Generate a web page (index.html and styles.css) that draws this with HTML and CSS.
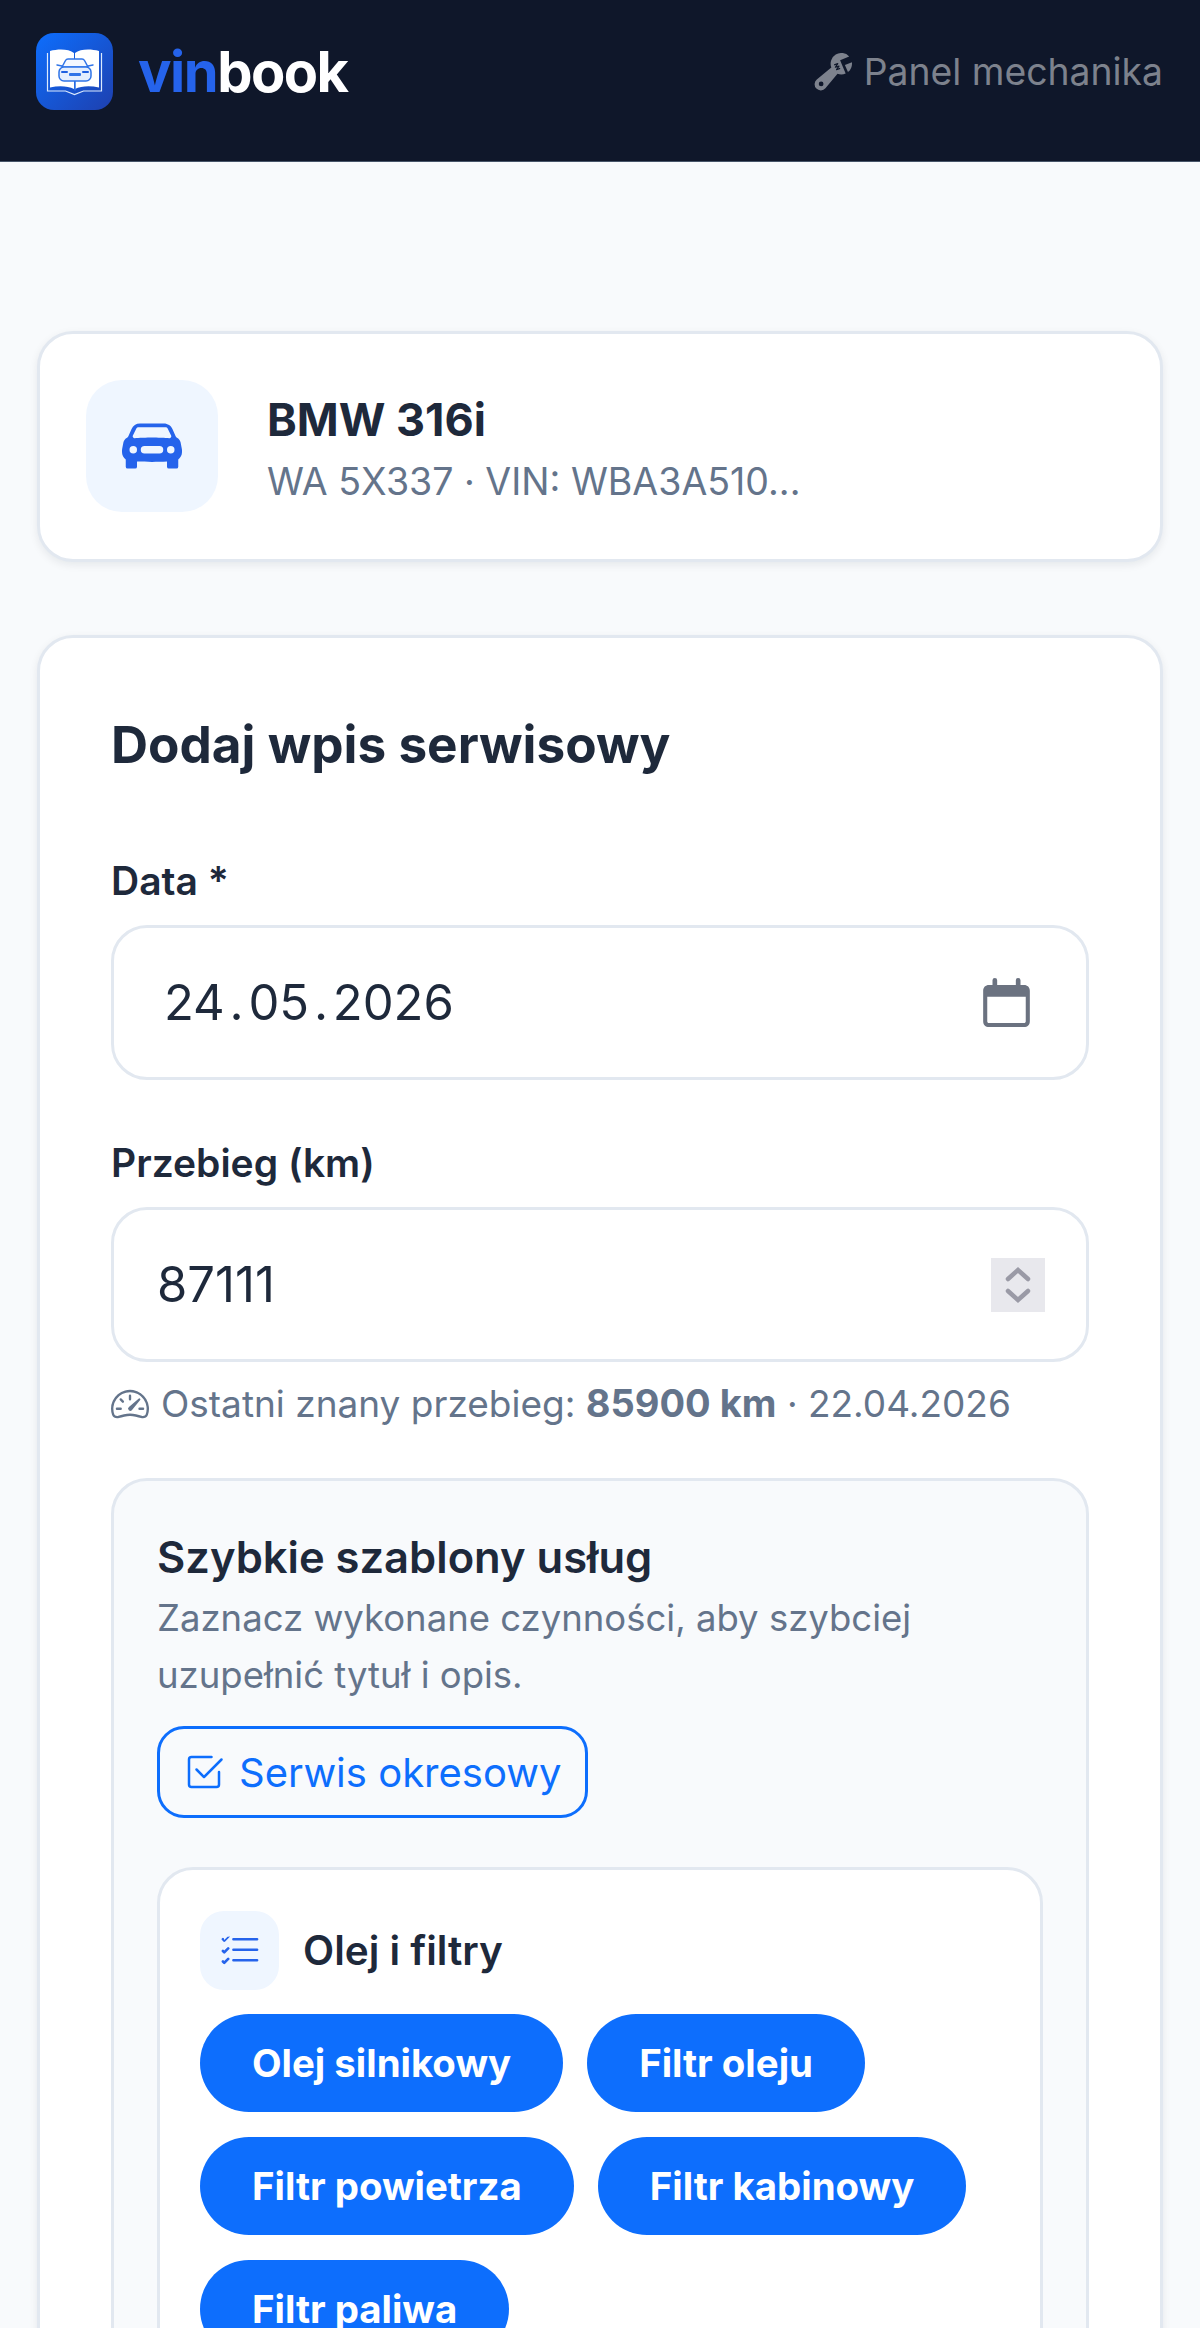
FILE: index.html
```html
<!DOCTYPE html>
<html lang="pl">
<head>
  <meta charset="UTF-8" />
  <title>vinbook - Dodaj wpis serwisowy</title>
  <link rel="stylesheet" href="styles.css">
</head>
<body>

<header class="topbar">
  <a class="brand" href="#">
    <svg class="brand-logo" viewBox="0 0 77 77">
      <defs>
        <linearGradient id="logo-bg" x1="0" y1="0" x2="1" y2="1">
          <stop offset="0" stop-color="#0d6efd" />
          <stop offset="1" stop-color="#1e40af" />
        </linearGradient>
      </defs>
      <rect width="77" height="77" rx="18" fill="url(#logo-bg)" />
      <path d="M11.500 20v38h18l9 3.500 9-3.500h18V20" fill="none" stroke="#dbeafe" stroke-width="1.200" />
      <path d="M14 18c9-2.500 19-2 24 2v36c-6-3-15-3.500-24-1.500z" fill="#fff" />
      <path d="M63 18c-9-2.500-19-2-24 2v36c6-3 15-3.500 24-1.500z" fill="#fff" />
      <path d="M26 33l-5-1M52 33l5-1M39 48v9" fill="none" stroke="#2f74e8" stroke-width="1.500" stroke-linecap="round" />
      <path d="M26 34l3.500-6.500c.6-1.100 1.500-1.500 2.500-1.500h14c1 0 1.900.4 2.500 1.500L52 34z" fill="#f4f8ff" stroke="#2f74e8" stroke-width="1.500" />
      <rect x="23" y="34" width="32" height="14" rx="5" fill="#e3eefe" stroke="#2f74e8" stroke-width="1.500" />
      <path d="M26 39h5M47 39h5" stroke="#1d5fe0" stroke-width="2" stroke-linecap="round" />
      <rect x="33" y="40" width="12" height="3" rx="1" fill="#2f74e8" />
    </svg>
    <span class="brand-name"><span class="brand-vin">vin</span>book</span>
  </a>
  <a class="panel-link" href="#">
    <svg class="icon" viewBox="0 0 16 16" fill="currentColor">
      <path d="M16 4.500a4.500 4.500 0 0 1-1.703 3.526L13 5l2.959-1.110q.04.3.041.61"/>
      <path d="M11.500 9c.653 0 1.273-.139 1.833-.39L12 5.500 11 3l3.826-1.530A4.500 4.500 0 0 0 7.290 6.092l-6.116 5.096a2.583 2.583 0 1 0 3.638 3.638L9.908 8.710A4.500 4.500 0 0 0 11.500 9m-1.292-4.361-.596.893.809-.27a.25.25 0 0 1 .287.377l-.596.893.809-.27.158.475-1.500.5a.25.25 0 0 1-.287-.376l.596-.893-.809.27a.25.25 0 0 1-.287-.377l.596-.893-.809.27-.158-.475 1.500-.5a.25.25 0 0 1 .287.376M3 14a1 1 0 1 1 0-2 1 1 0 0 1 0 2"/>
    </svg>
    Panel mechanika
  </a>
</header>

<main class="page">

  <section class="card vehicle">
    <div class="vehicle-icon">
      <svg viewBox="0 0 16 16" fill="currentColor">
        <path d="M2.520 3.515A2.500 2.500 0 0 1 4.820 2h6.362c1 0 1.904.596 2.298 1.515l.792 1.848c.075.175.21.319.38.404.5.25.855.715.965 1.262l.335 1.679q.05.242.049.49v.413c0 .814-.39 1.543-1 1.997V13.500a.5.5 0 0 1-.5.5h-2a.5.5 0 0 1-.5-.5v-1.338c-1.292.048-2.745.088-4 .088s-2.708-.04-4-.088V13.500a.5.5 0 0 1-.5.5h-2a.5.5 0 0 1-.5-.5v-1.892c-.61-.454-1-1.183-1-1.997v-.413a2.500 2.500 0 0 1 .049-.49l.335-1.680c.11-.546.465-1.012.964-1.261a.8.8 0 0 0 .381-.404l.792-1.848ZM3 10a1 1 0 1 0 0-2 1 1 0 0 0 0 2m10 0a1 1 0 1 0 0-2 1 1 0 0 0 0 2M6 8a1 1 0 0 0 0 2h4a1 1 0 1 0 0-2zM2.906 5.189a.51.51 0 0 0 .497.731c.91-.073 3.350-.17 4.597-.17s3.688.097 4.597.17a.51.51 0 0 0 .497-.731l-.956-1.913A.5.5 0 0 0 11.691 3H4.309a.5.5 0 0 0-.447.276L2.906 5.190Z"/>
      </svg>
    </div>
    <div class="vehicle-info">
      <div class="vehicle-name">BMW 316i</div>
      <div class="vehicle-meta">WA 5X337 · VIN: WBA3A510...</div>
    </div>
  </section>

  <section class="card form-card">
    <h1>Dodaj wpis serwisowy</h1>

    <div class="field">
      <div class="field-label">Data *</div>
      <div class="input input-date">
        <span>24 . 05 . 2026</span>
        <svg class="calendar" viewBox="4 3 40 42">
          <path d="M12 5a2 2 0 0 1 4 0v4h16V5a2 2 0 0 1 4 0v4h3c3 0 5 2 5 5v26c0 3-2 5-5 5H9c-3 0-5-2-5-5V14c0-3 2-5 5-5h3zM7.500 19v21c0 1 .5 1.500 1.500 1.500h30c1 0 1.500-.5 1.500-1.500V19z" fill="#6b7280" />
        </svg>
      </div>
    </div>

    <div class="field">
      <div class="field-label">Przebieg (km)</div>
      <div class="input input-number">
        <span>87111</span>
        <div class="spinner">
          <svg viewBox="0 0 54 54" fill="none" stroke="#9a9aa6" stroke-width="4.500" stroke-linecap="round">
            <path d="M17 21l10-9 10 9M17 33l10 9 10-9" />
          </svg>
        </div>
      </div>
      <p class="hint">
        <svg class="icon-hint" viewBox="0 0 16 16" fill="currentColor">
          <path d="M8 4a.5.5 0 0 1 .5.5V6a.5.5 0 0 1-1 0V4.500A.5.5 0 0 1 8 4M3.732 5.732a.5.5 0 0 1 .707 0l.915.914a.5.5 0 1 1-.708.708l-.914-.915a.5.5 0 0 1 0-.707M2 10a.5.5 0 0 1 .5-.5h1.586a.5.5 0 0 1 0 1H2.500A.5.5 0 0 1 2 10m9.500 0a.5.5 0 0 1 .5-.5h1.500a.5.5 0 0 1 0 1H12a.5.5 0 0 1-.5-.5m.754-4.246a.39.39 0 0 0-.527-.02L7.547 9.310a.91.91 0 1 0 1.302 1.258l3.434-4.297a.39.39 0 0 0-.029-.518z"/>
          <path fill-rule="evenodd" d="M0 10a8 8 0 1 1 15.547 2.661c-.442 1.253-1.845 1.602-2.932 1.250C11.309 13.488 9.475 13 8 13c-1.474 0-3.310.488-4.615.911-1.087.352-2.490.003-2.932-1.250A8 8 0 0 1 0 10m8-7a7 7 0 0 0-6.603 9.329c.203.575.923.876 1.680.63C4.397 12.533 6.358 12 8 12s3.604.532 4.923.96c.757.245 1.477-.056 1.680-.631A7 7 0 0 0 8 3"/>
        </svg>
        <span>Ostatni znany przebieg: <strong>85900 km</strong> · 22.04.2026</span>
      </p>
    </div>

    <div class="templates">
      <h2>Szybkie szablony usług</h2>
      <p class="templates-desc">Zaznacz wykonane czynności, aby szybciej uzupełnić tytuł i opis.</p>
      <button class="template-btn">
        <svg class="icon-btn" viewBox="0 0 16 16" fill="currentColor">
          <path d="M3 14.500A1.500 1.500 0 0 1 1.500 13V3A1.500 1.500 0 0 1 3 1.500h8a.5.5 0 0 1 0 1H3a.5.5 0 0 0-.5.5v10a.5.5 0 0 0 .5.5h10a.5.5 0 0 0 .5-.5V8a.5.5 0 0 1 1 0v5a1.500 1.500 0 0 1-1.500 1.500z"/>
          <path d="m8.354 10.354 7-7a.5.5 0 0 0-.708-.708L8 9.293 5.354 6.646a.5.5 0 1 0-.708.708l3 3a.5.5 0 0 0 .708 0"/>
        </svg>
        Serwis okresowy
      </button>

      <div class="group">
        <div class="group-head">
          <div class="group-icon">
            <svg viewBox="0 0 16 16" fill="currentColor">
              <path fill-rule="evenodd" d="M5 11.500a.5.5 0 0 1 .5-.5h9a.5.5 0 0 1 0 1h-9a.5.5 0 0 1-.5-.5m0-4a.5.5 0 0 1 .5-.5h9a.5.5 0 0 1 0 1h-9a.5.5 0 0 1-.5-.5m0-4a.5.5 0 0 1 .5-.5h9a.5.5 0 0 1 0 1h-9a.5.5 0 0 1-.5-.5M3.854 2.146a.5.5 0 0 1 0 .708l-1.500 1.500a.5.5 0 0 1-.708 0l-.5-.5a.5.5 0 1 1 .708-.708L2 3.793l1.146-1.147a.5.5 0 0 1 .708 0m0 4a.5.5 0 0 1 0 .708l-1.500 1.500a.5.5 0 0 1-.708 0l-.5-.5a.5.5 0 1 1 .708-.708L2 7.793l1.146-1.147a.5.5 0 0 1 .708 0m0 4a.5.5 0 0 1 0 .708l-1.500 1.500a.5.5 0 0 1-.708 0l-.5-.5a.5.5 0 0 1 .708-.708l.146.147 1.146-1.147a.5.5 0 0 1 .708 0"/>
            </svg>
          </div>
          <span class="group-title">Olej i filtry</span>
        </div>
        <div class="pills">
          <span class="pill">Olej silnikowy</span>
          <span class="pill">Filtr oleju</span>
          <span class="pill">Filtr powietrza</span>
          <span class="pill">Filtr kabinowy</span>
          <span class="pill">Filtr paliwa</span>
        </div>
      </div>
    </div>
  </section>

</main>

</body>
</html>
```

FILE: styles.css
```css
* {
  box-sizing: border-box;
}
html, body {
  height: 100%;
}
body {
  margin: 0;
  overflow: hidden;
  background: #f8fafc;
  color: #1e293b;
  font-family: Inter, "Noto Sans", sans-serif;
  font-size: 36px;
}
a {
  text-decoration: none;
}

.topbar {
  display: flex;
  justify-content: space-between;
  align-items: center;
  height: 162px;
  padding: 0 37px 18px 36px;
  background: #0f172a;
  border-bottom: 1px solid #475569;
}
.brand {
  display: flex;
  align-items: center;
  gap: 25px;
}
.brand-logo {
  display: block;
  width: 77px;
  height: 77px;
}
.brand-name {
  color: #fff;
  font-size: 56px;
  font-weight: 700;
  letter-spacing: -1.5px;
  line-height: 1;
}
.brand-vin {
  color: #2563eb;
}
.panel-link {
  display: flex;
  align-items: center;
  gap: 12px;
  color: #7d828d;
  font-size: 37.300px;
}
.icon {
  width: 38px;
  height: 38px;
  flex: none;
}

.page {
  padding: 169px 37px 0;
}
.card {
  background: #fff;
  border: 3px solid #e2e8f0;
  border-radius: 36px;
  box-shadow: 0 3px 9px rgba(15, 23, 42, 0.08);
}
.vehicle {
  display: flex;
  align-items: center;
  gap: 49px;
  height: 231px;
  padding: 0 46px 2px;
  margin-bottom: 73px;
}
.vehicle-icon {
  display: flex;
  align-items: center;
  justify-content: center;
  width: 132px;
  height: 132px;
  border-radius: 36px;
  background: #eff6ff;
  color: #2563eb;
}
.vehicle-icon svg {
  width: 60px;
  height: 60px;
}
.vehicle-info {
  padding-top: 7px;
}
.vehicle-name {
  font-size: 45px;
  font-weight: 700;
  line-height: 60px;
}
.vehicle-meta {
  margin-top: 5px;
  color: #64748b;
  font-size: 37.500px;
  line-height: 54px;
}

.form-card {
  padding: 71px 71px;
}
h1 {
  margin: 0 0 75px;
  font-size: 51.300px;
  font-weight: 700;
  line-height: 70px;
}
.field {
  margin-bottom: 56px;
}
.field-label {
  margin-bottom: 17px;
  font-size: 39px;
  font-weight: 600;
  line-height: 54px;
}
.input {
  display: flex;
  justify-content: space-between;
  align-items: center;
  height: 155px;
  padding: 0 43px;
  background: #fff;
  border: 3px solid #e2e8f0;
  border-radius: 36px;
  font-size: 49px;
  font-weight: 400;
}
.input-date {
  padding-left: 50px;
  word-spacing: -9px;
}
.input-number {
  padding-right: 41px;
}
.calendar {
  display: block;
  width: 47px;
  height: 49px;
  margin-right: 13px;
}
.spinner {
  width: 54px;
  height: 54px;
}
.spinner svg {
  display: block;
  width: 54px;
  height: 54px;
  background: #e8e8ed;
}
.hint {
  display: flex;
  align-items: center;
  gap: 12px;
  margin: 22px 0 -1px;
  color: #64748b;
  font-size: 37px;
  line-height: 38px;
}
.hint strong {
  font-size: 38px;
  font-weight: 700;
}
.icon-hint {
  width: 38px;
  height: 38px;
  flex: none;
}

.templates {
  padding: 46px 43px;
  background: #f8fafc;
  border: 3px solid #e2e8f0;
  border-radius: 36px;
}
h2 {
  margin: 0 0 3px;
  font-size: 43.500px;
  font-weight: 600;
  line-height: 60px;
}
.templates-desc {
  margin: 0 0 23px;
  color: #64748b;
  font-size: 36.500px;
  line-height: 56.500px;
}
.template-btn {
  display: flex;
  align-items: center;
  gap: 15px;
  height: 92px;
  padding: 0 24px 0;
  margin-bottom: 49px;
  background: transparent;
  border: 3px solid #0d6efd;
  border-radius: 27px;
  color: #0d6efd;
  font: inherit;
  font-size: 40px;
}
.icon-btn {
  width: 40px;
  height: 40px;
  flex: none;
}
.group {
  padding: 41px 40px 60px;
  background: #fff;
  border: 3px solid #e2e8f0;
  border-radius: 36px;
}
.group-head {
  display: flex;
  align-items: center;
  gap: 24px;
  margin-bottom: 24px;
}
.group-icon {
  display: flex;
  align-items: center;
  justify-content: center;
  width: 79px;
  height: 79px;
  border-radius: 24px;
  background: #eff6ff;
  color: #2563eb;
}
.group-icon svg {
  width: 42px;
  height: 42px;
}
.group-title {
  font-size: 40.500px;
  font-weight: 600;
}
.pills {
  display: flex;
  flex-wrap: wrap;
  gap: 25px 24px;
}
.pill {
  display: flex;
  align-items: center;
  height: 98px;
  padding: 0 52px;
  background: #0d6efd;
  border-radius: 49px;
  color: #fff;
  font-size: 38.400px;
  font-weight: 700;
}
```
